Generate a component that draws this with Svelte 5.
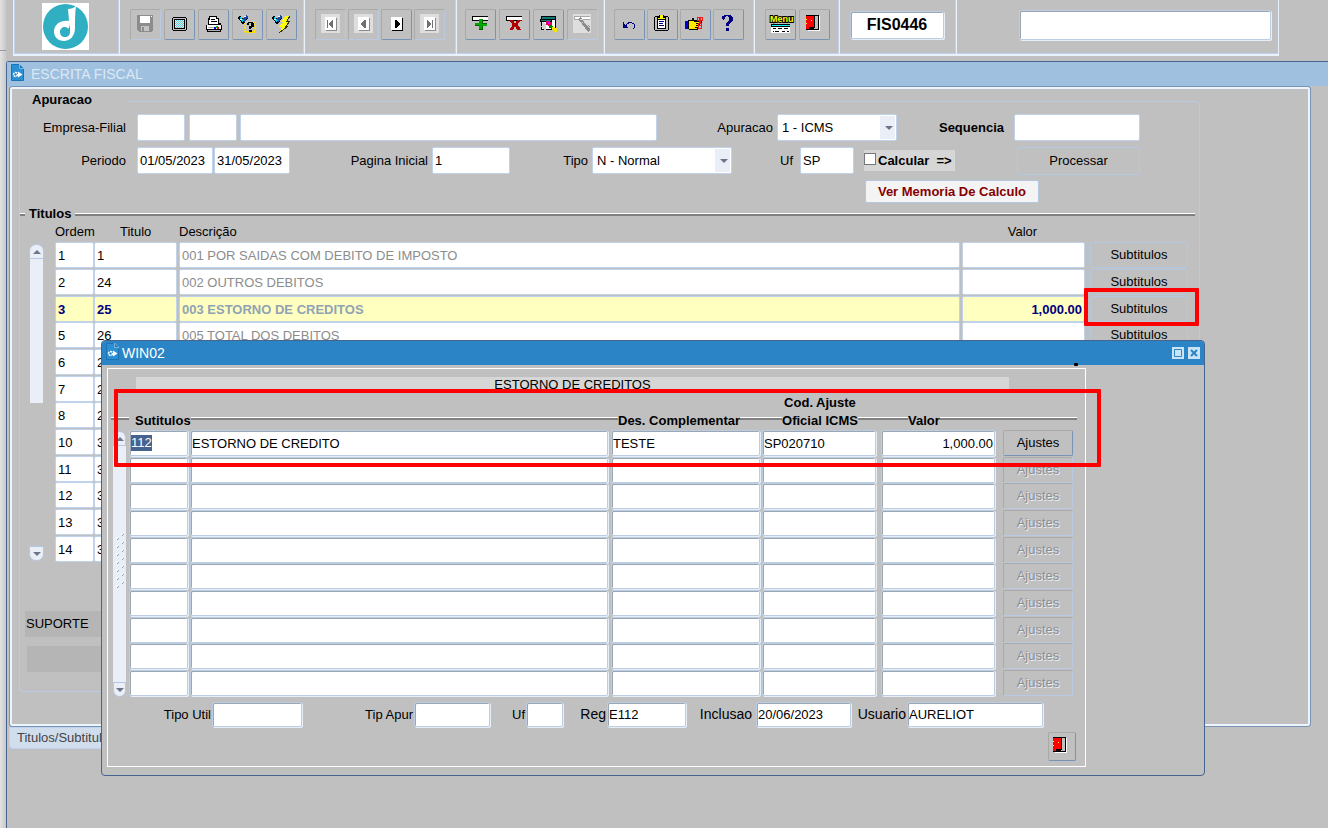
<script>
  const titulos = [
    { ordem: '1', titulo: '1', desc: '001 POR SAIDAS COM DEBITO DE IMPOSTO', valor: '' },
    { ordem: '2', titulo: '24', desc: '002 OUTROS DEBITOS', valor: '' },
    { ordem: '3', titulo: '25', desc: '003 ESTORNO DE CREDITOS', valor: '1,000.00', atual: true },
    { ordem: '5', titulo: '26', desc: '005 TOTAL DOS DEBITOS', valor: '' },
    { ordem: '6', titulo: '2', desc: '', valor: '' },
    { ordem: '7', titulo: '2', desc: '', valor: '' },
    { ordem: '8', titulo: '2', desc: '', valor: '' },
    { ordem: '10', titulo: '3', desc: '', valor: '' },
    { ordem: '11', titulo: '3', desc: '', valor: '' },
    { ordem: '12', titulo: '3', desc: '', valor: '' },
    { ordem: '13', titulo: '3', desc: '', valor: '' },
    { ordem: '14', titulo: '3', desc: '', valor: '' }
  ];

  const vazio = { sub: '', nome: '', comp: '', cod: '', valor: '' };
  const subtitulos = [
    { sub: '112', nome: 'ESTORNO DE CREDITO', comp: 'TESTE', cod: 'SP020710', valor: '1,000.00' },
    ...Array.from({ length: 9 }, () => ({ ...vazio }))
  ];

  const grupos = [
    [['salvar', true], ['tela'], ['imprimir'], ['consultar'], ['executar']],
    [['primeiro', true], ['anterior', true], ['proximo'], ['ultimo', true]],
    [['inserir'], ['remover'], ['lista'], ['limpar', true]],
    [['desfazer'], ['colar'], ['chamar'], ['ajuda']],
    [['menu'], ['sair']]
  ];
</script>

{#snippet porta()}
  <path d="M8 6h12v15H8z" fill="#000" />
  <path d="M15 7h4v13h-4z" fill="#c0c0c0" />
  <path d="M7 6h8v12h-2v2h-2v1H7z" fill="#f00" />
  <path d="M7 6h9v13h-2v1h-3v1H7v-1h3v-2h5V7H7z" fill="#000" />
  <path d="M7 10h1v1H7zM7 14h1v1H7zM12 11h1v1h-1z" fill="#ff0" />
  <path d="M20 7h1v15H9v-1h11z" fill="#fff" />
{/snippet}

{#snippet caneta()}
  <path d="M7 7h2v2h2l3-2 2 2-2 3-2 3h-2l-1-2-3-3z" fill="#000" />
  <path d="M8 8l2 2 3-1-1 3-2 1-2-3z" fill="#00c8e0" />
  <path d="M11 9l4-3 1 2-3 5h-1z" fill="#1848a0" />
  <path d="M8 10h2v1H8zM12 7h2v1h-2z" fill="#fff" />
{/snippet}

{#snippet seta(nome, ativo)}
  {#if !ativo}<path d="M6 5h19v19H6z" fill="#dedede" />{/if}
  <path d="M11 9h11v13H11z" fill={ativo ? '#000' : '#8c8c8c'} />
  <path d="M10 8h11v13H10z" fill="#fff" />
  <g fill={ativo ? '#000' : '#707070'}>
    {#if nome === 'primeiro'}<path d="M12 11h1v8h-1zM14 14h1v-1h1v-1h1v-1h1v8h-1v-1h-1v-1h-1v-1h-1z" />
    {:else if nome === 'anterior'}<path d="M13 14h1v-1h1v-1h1v-1h2v8h-2v-1h-1v-1h-1v-1h-1z" />
    {:else if nome === 'proximo'}<path d="M14 11h2v1h1v1h1v1h1v2h-1v1h-1v1h-1v1h-2z" />
    {:else}<path d="M13 11h1v1h1v1h1v1h1v2h-1v1h-1v1h-1v1h-1zM18 11h1v8h-1z" />{/if}
  </g>
{/snippet}

{#snippet icone(nome)}
  <svg width="31" height="31" viewBox="0 0 31 31" shape-rendering="crispEdges" aria-hidden="true">
    {#if nome === 'salvar'}
      <path d="M7 6h16v16h-1v1H9v-1H8v-1H7z" fill="#8c8c8c" />
      <path d="M10 7h10v7H10z" fill="#fff" />
      <path d="M21 7h1v1h-1z" fill="#fff" />
      <path d="M11 17h8v5h-8z" fill="#c4c4c4" />
      <path d="M12 18h2v4h-2z" fill="#8c8c8c" />
    {:else if nome === 'tela'}
      <path d="M9 8h13v1h1v12h-1v1H9v-1H8V9h1z" fill="#000" />
      <path d="M9 9h13v12H9z" fill="#c0c0c0" />
      <path d="M10 10h11v10H10z" fill="#000" />
      <path d="M11 11h9v8h-9z" fill="#58d4dc" />
      <path d="M11.500 11v8M13.500 11v8M15.500 11v8M17.500 11v8M19.500 11v8" stroke="#fff" stroke-dasharray="1 1" />
      <path d="M12.500 12v7M14.500 12v7M16.500 12v7M18.500 12v7" stroke="#d8dede" stroke-dasharray="1 1" />
    {:else if nome === 'imprimir'}
      <path d="M11 7h8v2h2v5h2v2h1v5h-1v2H9v-2H8v-5h2V9h1z" fill="#000" />
      <path d="M12 8h6v2h2v5h-9v-4h1z" fill="#fff" />
      <path d="M13 10h4v1h-4zM13 12h6v1h-6z" fill="#000" />
      <path d="M9 16h14v4H9z" fill="#fff" />
      <path d="M10 18h6v1h-6zM10 21h12v1H10z" fill="#b0b0b0" />
      <path d="M16 18h2v2h-2z" fill="#00f" /><path d="M18 17h2v2h-2z" fill="#0c0" /><path d="M19 18h2v2h-2z" fill="#f00" />
    {:else if nome === 'consultar'}
      {@render caneta()}
      <rect x="13" y="13" width="10" height="10" fill="none" stroke="#ffe600" stroke-width="2" stroke-dasharray="1 1" />
      <path d="M16 13h5v1h1v4h-2v1h-1v1h-2v-3h2v-3h-2v2h-2v-2h1zM17 21h3v2h-3z" fill="#000" />
    {:else if nome === 'executar'}
      {@render caneta()}
      <path d="M19 7h5l-3 5h3l-4 5h2L13 24l3-6h-3l4-5h-2z" fill="#ff0" />
      <path d="M24 7l-3 5h3l-4 5h2L13 24" fill="none" stroke="#303000" />
    {:else if nome === 'primeiro' || nome === 'anterior' || nome === 'ultimo'}
      {@render seta(nome, false)}
    {:else if nome === 'proximo'}
      {@render seta(nome, true)}
    {:else if nome === 'inserir'}
      <path d="M7 7h16v5H7z" fill="#000" /><path d="M8 8h15v3H8z" fill="#fff" />
      <path d="M14 10h4v4h4v3h-4v4h-4v-4h-4v-3h4z" fill="#00a800" />
      <path d="M17 11h1v3h4v1h-5zM17 17h1v4h-4v-1h3zM10 16h4v1h-4z" fill="#006000" />
    {:else if nome === 'remover'}
      <path d="M7 7h16v5H7z" fill="#000" /><path d="M8 8h15v3H8z" fill="#fff" />
      <path d="M11 11h3v1h1v2h2v-2h1v-1h4v1h-1v1h-1v1h-1v3h1v1h1v2h1v1h-4v-1h-1v-2h-2v2h-1v1h-3v-2h1v-1h1v-4h-1v-1h-1z" fill="#b00000" />
    {:else if nome === 'lista'}
      <path d="M8 7h15v14H8z" fill="#000" /><path d="M9 8h13v2H9z" fill="#107878" />
      <path d="M9 11h13v9H9z" fill="#fff" /><path d="M7 10h12v3H7z" fill="#000" /><path d="M8 11h10v1H8z" fill="#107878" />
      <path d="M10 13l3 2v7l-5-4z" fill="#d0d0d0" />
      <path d="M13 12h4v1h2v4h-4v-1h-2z" fill="#e00050" /><path d="M15 13h2v2h-2z" fill="#c0f" />
      <path d="M16 16h3v1h1v3h-2v-1h-2z" fill="#080" /><path d="M19 18h3v1h2v4h-3v-2h-2z" fill="#f4e800" />
    {:else if nome === 'limpar'}
      <path d="M6 5h18v19H6z" fill="#dedede" />
      <path d="M7 7h16v4H7z" fill="#a8a8a8" /><path d="M8 8h15v2H8z" fill="#fff" />
      <path d="M11 10l3-2 9 10v4l-2 1z" fill="#8c8c8c" />
      <path d="M13 11l2-1 8 9M14 15l2-2" fill="none" stroke="#d8d8d8" />
    {:else if nome === 'desfazer'}
      <path d="M9 13h1v2h1v1h1v1h1v1h1v1H9zM13 14h2v1h-2v2h-1v-2h1zM14 13h4v1h-4zM18 14h2v1h-2zM20 15h1v4h-1zM19 19h1v1h-1z" fill="#000080" />
    {:else if nome === 'colar'}
      <path d="M8 7h13v1h1v13h-1v1H8v-1H7V8h1z" fill="#000" /><path d="M8 8h13v13H8z" fill="#c0c0c0" />
      <path d="M10 9h9v11h-9z" fill="#000" /><path d="M11 10h7v9h-7z" fill="#fff" />
      <path d="M12 12h5v1h-5zM12 14h4v1h-4zM12 16h5v1h-5z" fill="#000080" />
      <path d="M12 6h5v2h2v3h-9V8h2z" fill="#000" /><path d="M13 6h3v3h2v1h-7V9h2z" fill="#ff0" />
    {:else if nome === 'chamar'}
      <path d="M5 12h3v8H5z" fill="#0000d0" />
      <path d="M8 11h4v-2h2v2h8v3h-2v2h-1v3h-1v2H9v-1H8z" fill="#000" />
      <path d="M9 12h5v1h7v1h-5v1h3v1h-3v1h2v1h-3v1h2v1H9z" fill="#ffe800" />
      <g fill="none" stroke="#f01818"><path d="M17.500 8.500h2v3h-2zM20.500 8.500h2v3h-2zM18.500 16.500h3v3h-3zM19 12l3 4M21 12l-3 4" /></g>
    {:else if nome === 'ajuda'}
      <path d="M11 6h7v1h1v1h1v4h-1v1h-1v1h-1v1h-1v2h-3v-3h1v-1h1v-1h1V8h-1V7h-2v1h-1v2h-1v1h-1v-1h-1V7h2zM13 19h3v3h-3z" fill="#000080" />
    {:else if nome === 'menu'}
      <text x="5" y="13" font-size="9" font-weight="700" fill="#ff0" stroke="#000" stroke-width="2" paint-order="stroke">Menu</text>
      <path d="M6 15h19v9H6z" fill="#000" /><path d="M7 16h18v1H7z" fill="#0ff" /><path d="M6 18h19v6H6z" fill="#fff" />
      <path d="M8 19h3v1H8zM8 22h1v1H8zM10 22h4v1h-4zM13 19h4v1h-4zM17 22h3v1h-3zM19 19h4v1h-4zM22 22h2v1h-2z" fill="#000" />
    {:else}
      {@render porta()}
    {/if}
  </svg>
{/snippet}

{#snippet documento()}
  <svg class="doc" width="13" height="17" viewBox="0 0 13 17" aria-hidden="true">
    <path d="M.5 .5h8l4 4v12H.5z" fill="#2b8fd4" stroke="#1c73b4" />
    <path d="M8.500 0v4.500H13z" fill="#1c73b4" stroke="#b4d6ef" stroke-width=".6" />
    <circle cx="4.500" cy="10.500" r="2" fill="none" stroke="#fff" stroke-width="1.500" stroke-dasharray="2 .7" />
    <path d="M7 7.500v6l4.500-3z" fill="#fff" />
  </svg>
{/snippet}

<div class="pagina">
  <div class="margem"></div>
  <div class="conteudo">
    <header class="barra">
      <div class="celula marca">
        <svg width="47" height="47" viewBox="0 0 47 47" role="img" aria-label="Logo">
          <path d="M0 0h47v47H0z" fill="#fff" />
          <circle cx="23.500" cy="23.500" r="22.500" fill="#2fafc1" />
          <path d="M26 6c3 0 6-1 8-3-1 7-1 14-1 22 0 9-6 13-11 13-6 0-10-4-10-9.500C12 22 18 17 27 18z" fill="#fff" />
          <path d="M28 20v9c0 3-2 5-5 5s-5-2-5-5 2-5 5-5c2 0 3 1 3 2 1-1 2-3 2-6z" fill="#2fafc1" />
        </svg>
      </div>
      {#each grupos as grupo, i}
        <div class="celula g{i}">
          {#each grupo as [nome, inativo]}
            <button class="ferramenta" disabled={inativo} aria-label={nome}>{@render icone(nome)}</button>
          {/each}
        </div>
      {/each}
      <div class="celula programa"><input class="fundo" aria-label="Programa" value="FIS0446" /></div>
      <div class="celula pesquisa"><input class="fundo" aria-label="Pesquisa" /></div>
    </header>

    <main class="janela">
      <h1 class="titulo-janela">{@render documento()}ESCRITA FISCAL</h1>
      <div class="painel">
        <fieldset class="apuracao">
          <legend>Apuracao</legend>
          <div class="linha">
            <label class="l-esq" for="empresa">Empresa-Filial</label>
            <input id="empresa" class="w48" />
            <input class="w48 filial" aria-label="Filial" />
            <input class="nome" aria-label="Nome da empresa" />
            <label class="l-apuracao" for="apuracao">Apuracao</label>
            <span class="escolha w120"><select id="apuracao"><option>1 - ICMS</option></select></span>
            <label class="l-seq" for="sequencia">Sequencia</label>
            <input id="sequencia" class="w126" />
          </div>
          <div class="linha">
            <label class="l-esq" for="inicio">Periodo</label>
            <input id="inicio" class="w76" value="01/05/2023" />
            <input class="w76 fim" aria-label="Periodo final" value="31/05/2023" />
            <label class="l-pagina" for="pagina">Pagina Inicial</label>
            <input id="pagina" class="w78" value="1" />
            <label class="l-tipo" for="tipo">Tipo</label>
            <span class="escolha w140"><select id="tipo"><option>N - Normal</option></select></span>
            <label class="l-uf" for="uf">Uf</label>
            <input id="uf" class="w54" value="SP" />
            <label class="calcular"><input type="checkbox" />Calcular&nbsp; =&gt;</label>
            <button class="processar">Processar</button>
          </div>
          <div class="linha memoria"><button>Ver Memoria De Calculo</button></div>

          <h2 class="secao">Titulos</h2>
          <div class="lista">
            <div class="rolagem">
              <button aria-label="Subir"><i class="cima"></i></button>
              <div class="curso"></div>
              <button class="baixo-btn" aria-label="Descer"><i class="baixo"></i></button>
            </div>
            <table class="titulos">
              <colgroup><col class="c39" /><col class="c83" /><col /><col class="c125" /><col class="c103" /></colgroup>
              <thead><tr><th>Ordem</th><th class="t">Titulo</th><th class="d">Descrição</th><th class="v">Valor</th><th></th></tr></thead>
              <tbody>
                {#each titulos as t}
                  <tr class:atual={t.atual}>
                    <td><input aria-label="Ordem" value={t.ordem} /></td>
                    <td><input aria-label="Titulo" value={t.titulo} /></td>
                    <td class="p2"><input class="desc" aria-label="Descrição" value={t.desc} readonly /></td>
                    <td class="p2"><input class="num" aria-label="Valor" value={t.valor} /></td>
                    <td class="p5"><button>Subtitulos</button>{#if t.atual}<span class="destaque"></span>{/if}</td>
                  </tr>
                {/each}
              </tbody>
            </table>
          </div>
          <div class="suporte">SUPORTE</div>
          <div class="suporte vazio"></div>
        </fieldset>
      </div>
      <button class="aba">Titulos/Subtitulos</button>
    </main>
  </div>

  <section class="dialogo" aria-label="WIN02">
    <h2 class="titulo-dialogo">
      {@render documento()}<span>WIN02</span>
      <button aria-label="Maximizar"><svg width="12" height="12" viewBox="0 0 12 12"><path d="M2.500 2.500h7v7h-7z" fill="none" stroke="#2b84c5" /></svg></button>
      <button aria-label="Fechar"><svg width="12" height="12" viewBox="0 0 12 12"><path d="M3 3l6 6M9 3l-6 6" stroke="#2b84c5" stroke-width="2" /></svg></button>
    </h2>
    <span class="ponto"></span>
    <div class="quadro">
      <div class="faixa">ESTORNO DE CREDITOS</div>
      <div class="lista sub">
        <div class="rolagem fina">
          <button aria-label="Subir"><i class="cima"></i></button>
          <div class="curso">
            <svg width="12" height="60" viewBox="0 0 12 60" aria-hidden="true">
              {#each Array.from({ length: 7 }) as _, k}
                <path d="M3 {k * 8 + 6}l2-2M8 {k * 8 + 2}l2-2" stroke="#8aa4c4" />
                <path d="M2 {k * 8 + 5}l2-2M7 {k * 8 + 1}l2-2" stroke="#fff" />
              {/each}
            </svg>
          </div>
          <button class="baixo-btn" aria-label="Descer"><i class="baixo"></i></button>
        </div>
        <table class="subtitulos">
          <colgroup><col class="c59" /><col /><col class="c152" /><col class="c116" /><col class="c119" /><col class="c78" /></colgroup>
          <thead><tr>
            <th class="s"><span>Sutitulos</span></th><th></th><th class="dc"><span>Des. Complementar</span></th>
            <th class="ca"><span>Cod. Ajuste<br />Oficial ICMS</span></th><th class="vl"><span>Valor</span></th><th></th>
          </tr></thead>
          <tbody>
            {#each subtitulos as s, i}
              <tr>
                <td>{#if i === 0}<div class="fundo celula-sel"><mark>{s.sub}</mark></div>{:else}<input class="fundo" aria-label="Subtitulo" />{/if}</td>
                <td class="p2"><input class="fundo" aria-label="Descrição" value={s.nome} /></td>
                <td class="p3"><input class="fundo" aria-label="Des. Complementar" value={s.comp} /></td>
                <td class="p2"><input class="fundo" aria-label="Cod. Ajuste Oficial ICMS" value={s.cod} /></td>
                <td class="p5"><input class="fundo num" aria-label="Valor" value={s.valor} /></td>
                <td class="p8"><button disabled={i > 0}>Ajustes</button></td>
              </tr>
            {/each}
          </tbody>
        </table>
      </div>
      <div class="rodape">
        <label class="r-util" for="util">Tipo Util</label><input id="util" class="fundo w90" />
        <label class="r-apur" for="apur">Tip Apur</label><input id="apur" class="fundo w76" />
        <label class="r-uf" for="uf2">Uf</label><input id="uf2" class="fundo w37" />
        <label class="r-reg maior" for="reg">Reg</label><input id="reg" class="fundo w79" value="E112" />
        <label class="r-inc maior" for="inc">Inclusao</label><input id="inc" class="fundo w95" value="20/06/2023" />
        <label class="r-usu maior" for="usu">Usuario</label><input id="usu" class="fundo w136" value="AURELIOT" />
      </div>
      <button class="ferramenta sair" aria-label="Sair"><svg width="27" height="27" viewBox="3 2 27 27" shape-rendering="crispEdges" aria-hidden="true">{@render porta()}</svg></button>
    </div>
    <span class="destaque linha-sub"></span>
  </section>
</div>

<style>
  :global(body) { margin: 0; background: #c0c0c0; }
  * { box-sizing: border-box; }
  .pagina {
    position: relative; display: grid; grid-template-columns: 6px 1fr; min-height: 100vh;
    font: 13px/16px "Liberation Sans", Arial, sans-serif; color: #000; background: #c0c0c0;
  }
  .margem { background: linear-gradient(#999, #999) 0 50px / 100% 1px no-repeat, linear-gradient(90deg, #e2e2e2, #c8c8c8); }
  .conteudo { display: flex; flex-direction: column; min-width: 0; }
  input, select, button { font: inherit; color: inherit; margin: 0; padding: 0; border-radius: 2px; min-width: 0; }
  input, select { border: 1px solid #c0d3ea; background: #fff; padding: 0 2px; outline: 0; }
  button { background: #c0c0c0; border: 1px solid #b4c8e2; }
  h1, h2 { margin: 0; font-weight: 400; }
  label { white-space: nowrap; text-align: right; flex: none; }
  .num { text-align: right; }
  .fundo { border-color: #bccde2; box-shadow: inset 1px 1px 0 #9ba7b5, 1px 1px 0 #e6eef8; padding: 0 1px; }

  /* barra de ferramentas */
  .barra {
    display: flex; height: 56px; margin: 0 49px 5px 7px;
    border: solid #e8f1fc; border-width: 0 1px 2px; box-shadow: inset 1px 0 0 #c0d3ea, inset 0 -1px 0 #c0d3ea;
  }
  .celula { display: flex; align-items: flex-start; flex: none; gap: 2px; padding: 9px 0 0 10px; border-left: 1px solid #e8f1fc; box-shadow: -1px 0 0 #c0d3ea; }
  .marca { width: 105px; padding: 3px 0 0 28px; border: 0; box-shadow: none; }
  .g0 { width: 185px; gap: 3px; }
  .g1 { width: 152px; }
  .g2 { width: 148px; padding-left: 8px; gap: 3px; }
  .g3 { width: 150px; padding-left: 9px; }
  .g4 { width: 85px; gap: 3px; }
  .ferramenta { display: grid; place-items: center; width: 31px; height: 31px; border-color: #a9a9a9 #7793b5 #7793b5 #a9a9a9; }
  .ferramenta:disabled { border-color: #aaa #b8cae2 #b8cae2 #aaa; }
  .ferramenta svg { flex: none; margin: -1px; }
  .programa { width: 117px; padding-top: 11px; }
  .programa input { width: 94px; height: 28px; font-size: 16px; font-weight: 700; text-align: center; }
  .pesquisa { flex: 1; justify-content: flex-end; padding: 10px 7px 0 62px; }
  .pesquisa input { flex: 1; height: 30px; }

  /* janela principal */
  .janela { flex: 1; border: solid #486790; border-width: 1px 0 0 1px; border-top-left-radius: 3px; }
  .titulo-janela { display: flex; align-items: center; gap: 7px; height: 24px; padding-left: 4px; background: #9fc0df; color: #dbe9f6; font-size: 14px; }
  .doc { margin-bottom: 3px; flex: none; }
  .painel {
    margin: 0 17px 0 2px; padding: 5px 110px 34px 9px;
    border: 1px solid #7793b5; border-radius: 3px; box-shadow: inset 0 0 0 2px #edf4fc;
  }
  .apuracao { margin: 0; padding: 4px 0 19px; min-width: 0; border: 1px solid #b9cbe2; border-radius: 4px; }
  .apuracao legend { margin-left: -1px; padding: 0 0 0 13px; width: 108px; line-height: 16px; height: 18px; background: #c0c0c0; font-weight: 700; }
  .linha { display: flex; align-items: center; height: 27px; margin-bottom: 6px; padding-right: 59px; }
  .linha > input, .escolha { height: 27px; flex: none; }
  .l-esq { width: 117px; padding-right: 11px; }
  .w48 { width: 48px; }
  .w54 { width: 54px; }
  .w76 { width: 76px; }
  .w78 { width: 78px; }
  .w120 { width: 120px; }
  .w126 { width: 126px; }
  .w140 { width: 140px; }
  .filial { margin: 0 3px 0 4px; }
  .linha > .nome { flex: 1; }
  .l-apuracao { width: 120px; padding-right: 4px; }
  .l-seq { width: 117px; padding-right: 10px; font-weight: 700; }
  .fim { margin-left: 1px; }
  .l-pagina { width: 142px; padding-right: 4px; }
  .l-tipo { margin-left: auto; padding-right: 4px; }
  .l-uf { width: 68px; padding-right: 7px; }
  .escolha { position: relative; }
  .escolha select { appearance: none; width: 100%; height: 100%; padding: 0 18px 0 4px; background: linear-gradient(#e9eef7, #e9eef7) right 1px center / 15px 23px no-repeat #fff; }
  .escolha::after { content: ""; position: absolute; right: 4px; top: 12px; border: 4px solid transparent; border-top-color: #6d7489; border-bottom: 0; pointer-events: none; }
  .calcular { display: flex; align-items: center; width: 91px; height: 21px; margin-left: 10px; background: #d6d6d6; font-weight: 700; }
  .calcular input { appearance: none; width: 12px; height: 12px; margin: 0 2px 4px 0; padding: 0; border: 1px solid #777; border-radius: 0; }
  .processar { width: 123px; height: 28px; margin-left: 62px; flex: none; }
  .memoria { height: 23px; margin-bottom: 3px; padding-right: 160px; justify-content: flex-end; }
  .memoria button { width: 174px; height: 23px; background: #f4f4f4; color: #850000; font-weight: 700; }
  .secao { display: flex; align-items: center; gap: 4px; margin-right: 4px; font-size: 13px; font-weight: 700; }
  .secao::before, .secao::after { content: ""; width: 5px; height: 2px; border-top: 1px solid #fff; background: #808080; }
  .secao::after { width: auto; flex: 1; }

  .lista { display: flex; margin: 0 11px 0 9px; }
  table { flex: 1; width: 0; table-layout: fixed; border-collapse: collapse; }
  th, td { padding: 0; text-align: left; vertical-align: top; font-weight: 400; white-space: nowrap; }
  td input, td button { display: block; width: 100%; height: 26px; }
  tbody tr { height: 27px; }
  .c39 { width: 39px; }
  .c83 { width: 83px; }
  .c125 { width: 125px; }
  .c103 { width: 103px; }
  .titulos thead tr { height: 20px; }
  .titulos th { padding-top: 2px; }
  .titulos tbody tr:nth-child(3n) { height: 26px; }
  .titulos .t { padding-left: 26px; }
  .titulos .d { padding-left: 2px; }
  .titulos .v { text-align: center; }
  td.p2 { padding-left: 2px; }
  td.p3 { padding-left: 3px; }
  td.p5 { padding-left: 5px; position: relative; }
  td.p8 { padding-left: 8px; }
  .titulos .desc { color: #8c8c8c; }
  .atual input { background: #ffffc0; color: #000080; font-weight: 700; }
  .titulos .atual .desc { color: #8fa3b5; }
  .rolagem { display: flex; flex-direction: column; flex: none; width: 15px; margin: 22px 11px 1px 0; }
  .rolagem button { display: grid; place-items: center; height: 15px; background: #e9eef7; border-radius: 7px 7px 0 0; flex: none; }
  .rolagem .baixo-btn { margin-top: auto; border-radius: 0 0 7px 7px; }
  .curso { height: 144px; margin: 0 1px; background: #e9eef7; }
  .cima, .baixo { border: 4px solid transparent; border-bottom-color: #6d7489; border-top: 0; }
  .baixo { border: 4px solid transparent; border-top-color: #6d7489; border-bottom: 0; }
  .suporte { width: 120px; height: 26px; margin: 49px 0 9px 5px; padding: 5px 1px; background: #b5b5b5; }
  .vazio { margin: 0 0 0 7px; }
  .aba { display: block; height: 22px; margin-left: 2px; padding: 0 7px; background: #d0ddec; color: #444; border-color: #c0d3ea; border-radius: 0 0 4px 4px; }
  .destaque { position: absolute; z-index: 1; inset: -8px -11px -4px -1px; border: 4px solid #f00; border-radius: 1px; pointer-events: none; }

  /* janela de subtitulos */
  .dialogo { position: absolute; left: 101px; top: 340px; width: 1104px; border: 1px solid #44658f; border-radius: 4px; background: #c0c0c0; }
  .titulo-dialogo { display: flex; align-items: center; gap: 3px; height: 24px; padding: 0 4px; background: #2b84c5; color: #fff; font-size: 14px; border-radius: 3px 3px 0 0; }
  .titulo-dialogo span { flex: 1; }
  .titulo-dialogo button { width: 12px; height: 12px; border: 0; border-radius: 0; background: #c9e3f7; }
  .titulo-dialogo button:last-child { margin-left: 1px; }
  .titulo-dialogo button svg { display: block; }
  .ponto { position: absolute; left: 972px; top: 22px; width: 4px; height: 3px; border-radius: 1px; background: #000; }
  .quadro { margin: 3px 118px 8px 5px; border: 1px solid #fff; }
  .faixa { height: 14px; margin: 8px 76px 3px 28px; background: #d6d6d6; text-align: center; }
  .sub { position: relative; margin: 0 12px 0 5px; }
  .sub::before { content: ""; position: absolute; left: -2px; right: -4px; top: 23px; height: 2px; border-top: 1px solid #fff; background: #808080; }
  .subtitulos { position: relative; }
  .subtitulos thead tr { height: 36px; }
  .subtitulos tbody tr:nth-child(3n + 2) { height: 26px; }
  .subtitulos th { font-weight: 700; line-height: 18px; vertical-align: bottom; }
  .subtitulos th span { display: inline-block; background: #c0c0c0; vertical-align: top; }
  .subtitulos .s span { padding-left: 6px; }
  .subtitulos .dc { padding-left: 10px; }
  .subtitulos .vl { padding-left: 32px; }
  .subtitulos .ca { text-align: center; padding-left: 4px; }
  .subtitulos td input, .subtitulos td button, .celula-sel { height: 26px; }
  .subtitulos td button { border-color: #a9a9a9 #7793b5 #7793b5 #a9a9a9; }
  .subtitulos td button:disabled { border-color: #aaa #b8cae2 #b8cae2 #aaa; color: #8e8e8e; text-shadow: 1px 1px 0 #e8eef6; }
  .celula-sel { display: flex; align-items: center; border: 1px solid #bccde2; border-radius: 2px; background: #fff; }
  mark { background: #46628e; color: #fff; }
  .c59 { width: 59px; }
  .c152 { width: 152px; }
  .c116 { width: 116px; }
  .c119 { width: 119px; }
  .c78 { width: 78px; }
  .fina { width: 13px; margin: 37px 3px 0 0; }
  .fina .curso { display: grid; place-items: center; flex: 1; height: auto; margin: 0; }
  .rodape { display: flex; align-items: center; margin-top: 5px; }
  .rodape label { padding-right: 1px; }
  .rodape input { height: 25px; flex: none; }
  .rodape .maior { font-size: 14px; padding-bottom: 2px; }
  .r-util { width: 104px; }
  .r-apur { width: 112px; }
  .r-uf { width: 36px; }
  .r-reg { width: 44px; }
  .rodape .r-inc { width: 70px; padding-right: 4px; }
  .r-usu { width: 56px; }
  .w37 { width: 37px; }
  .w79 { width: 79px; }
  .w90 { width: 90px; }
  .w95 { width: 95px; }
  .w136 { width: 136px; }
  .sair { width: 28px; height: 29px; margin: 5px 9px 5px auto; }
  .linha-sub { inset: 48px 103px auto 12px; height: 78px; }
</style>
